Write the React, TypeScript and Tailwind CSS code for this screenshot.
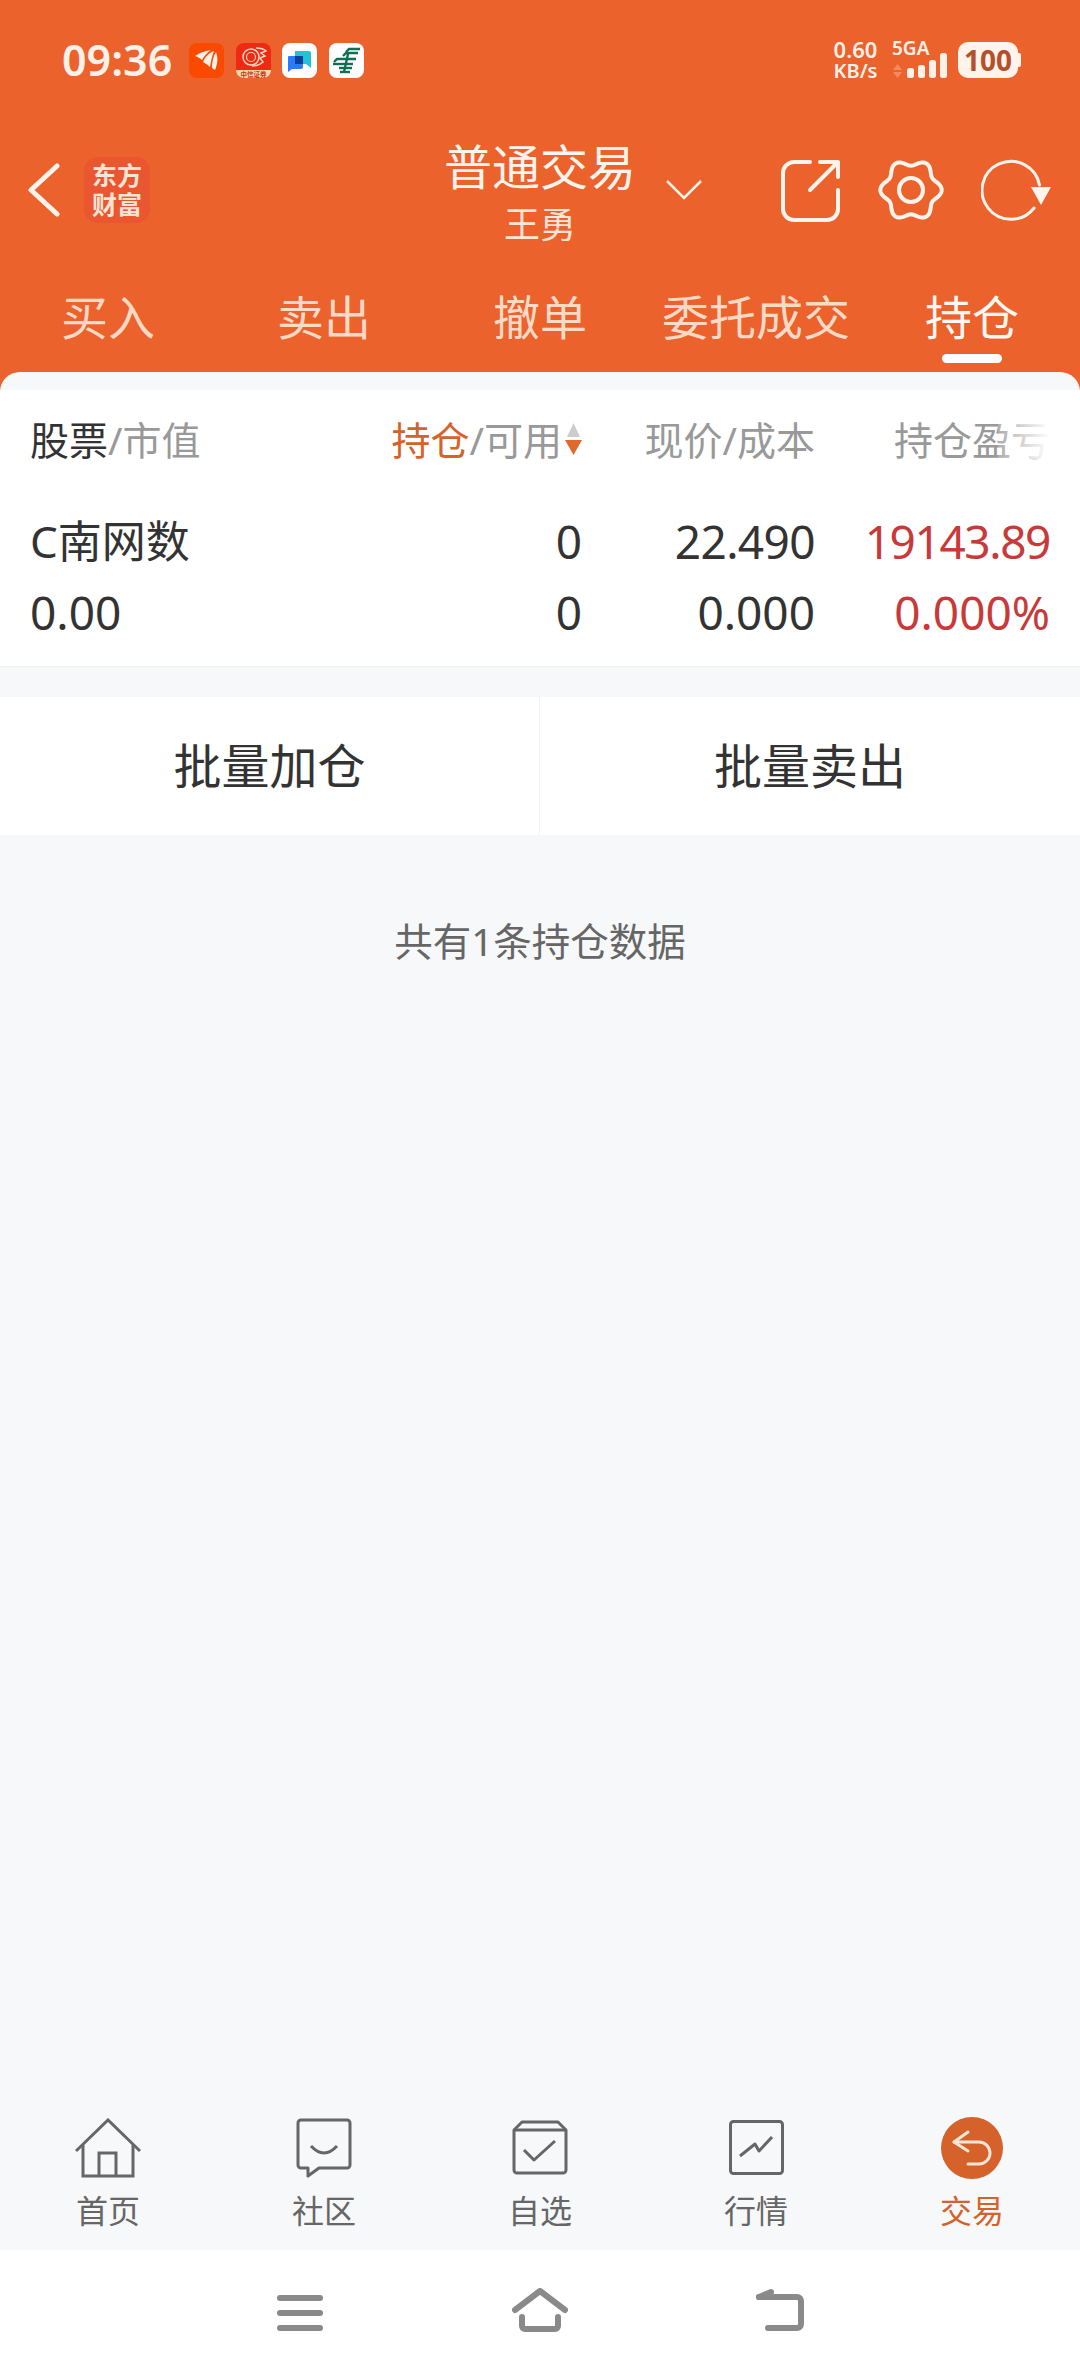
import { Fragment } from 'react';

const tabs = ['买入', '卖出', '撤单', '委托成交', '持仓'];

function gearPath() {
  const pts: string[] = [];
  for (let i = 0; i < 120; i++) {
    const t = (i / 120) * Math.PI * 2;
    const r = 27.5 + 3.2 * Math.cos(6 * t);
    pts.push(`${(33 + r * Math.cos(t)).toFixed(2)},${(32 + r * Math.sin(t)).toFixed(2)}`);
  }
  return `M${pts.join('L')}Z`;
}

function StatusIcons() {
  return (
    <div className="flex items-center gap-[11.5px]">
      <svg width="35" height="35" viewBox="0 0 35 35">
        <rect width="35" height="35" rx="8" fill="#F94A00" />
        <path d="M6 13 C12 9 17 8 22 7 C18 10 15 13 13 17 C11 15 9 14 6 13Z" fill="#FFF1E8" />
        <path d="M14 19 C16 14 20 10 25 8 C23 13 22 18 21 24 C19 22 16 20 14 19Z" fill="#FFF1E8" />
        <path d="M23 25 C23 18 25 12 27 9 C29 14 29 20 26 27 C25 26 24 26 23 25Z" fill="#FFF1E8" />
      </svg>
      <svg width="35" height="35" viewBox="0 0 35 35">
        <rect width="35" height="35" rx="8" fill="#EE2A12" />
        <circle cx="15" cy="14" r="8" fill="none" stroke="#FFD9C4" strokeWidth="1.5" />
        <circle cx="15" cy="14" r="4.5" fill="none" stroke="#FFD9C4" strokeWidth="1.2" />
        <path d="M20 5 C25 5 29 7 30 8 L25 10 L29 13 L24 15 L27 19 C24 22 20 23 16 23" fill="none" stroke="#FFD9C4" strokeWidth="1.4" />
        <path d="M0 27 H35 V27 C35 32 31 35 27 35 H8 C4 35 0 32 0 27Z" fill="#FBD8A8" />
        <text x="17.5" y="33.5" textAnchor="middle" fontSize="6.5" fontWeight="700" fill="#C9331B">中信证券</text>
      </svg>
      <svg width="35" height="35" viewBox="0 0 35 35">
        <rect width="35" height="35" rx="8" fill="#FFFFFF" />
        <path d="M13 8 H27 a2 2 0 0 1 2 2 V25 L24 21 H13Z" fill="#22C4D4" />
        <path d="M7 13 H19 a2 2 0 0 1 2 2 V24 a2 2 0 0 1-2 2 H10 L6 29 V14 a1 1 0 0 1 1-1Z" fill="#2A7CF6" />
        <rect x="13" y="13" width="8" height="8" fill="#0B3F9E" />
      </svg>
      <svg width="35" height="35" viewBox="0 0 35 35">
        <rect width="35" height="35" rx="8" fill="#FFFFFF" />
        <g fill="none" stroke="#0F6F55" strokeWidth="2.4">
          <path d="M17 9 L20 6 H31" />
          <path d="M14 13 L17 10 H29" />
          <path d="M5 19 L8 16 H27" />
          <path d="M4 21 H24" />
          <path d="M10 25 H23" />
          <path d="M11 29 H21" />
          <path d="M19 11 L15 29" />
        </g>
      </svg>
    </div>
  );
}

function NetworkCluster() {
  return (
    <div className="flex h-[36px] items-start text-[#FFF1E8] font-semibold">
      <div className="flex w-[47px] flex-col items-center">
        <span className="text-[22px] leading-[15px]">0.60</span>
        <span className="mt-[6px] text-[20px] leading-[15px]">KB/s</span>
      </div>
      <div className="ml-[13px] flex w-[56px] flex-col">
        <span className="h-[11px] text-[19px] leading-[13px]">5GA</span>
        <svg width="55" height="25" viewBox="0 0 55 25">
          <path d="M5.5 0 L10 6 H1Z M1 8 H10 L5.5 14Z" transform="translate(0 11)" fill="#F58A5E" />
          <rect x="15" y="15" width="7" height="10" rx="2.5" fill="#FFF1E8" />
          <rect x="26" y="12" width="7" height="13" rx="2.5" fill="#FFF1E8" />
          <rect x="37" y="7" width="7" height="18" rx="2.5" fill="#FFF1E8" />
          <rect x="48" y="0" width="7" height="25" rx="2.5" fill="#FFF1E8" />
        </svg>
      </div>
      <div className="ml-[10px] flex items-center">
        <div className="flex h-[36px] w-[60px] items-center justify-center rounded-[10px] bg-[#FFF3EC] text-[28px] font-bold leading-none text-[#B4512C]">
          100
        </div>
        <div className="h-[14px] w-[3px] rounded-r-[2px] bg-[#FFF3EC]" />
      </div>
    </div>
  );
}

function TitleRow() {
  return (
    <div className="mt-[67px] flex h-[97px] items-start">
      <div className="flex w-[444px] items-center pl-[27px] pt-[12px]">
        <svg width="34" height="54" viewBox="0 0 34 54" fill="none" stroke="#FFF4EC" strokeWidth="5" strokeLinecap="round" strokeLinejoin="round">
          <path d="M30 3 L4 27 L30 51" />
        </svg>
        <div className="ml-[23px] flex h-[66px] w-[66px] flex-col items-center justify-center rounded-[14px] bg-[#E9562F] text-[25px] font-bold leading-[29px] text-[#FBE3D6]">
          <span>东方</span>
          <span>财富</span>
        </div>
      </div>
      <div className="flex w-[192px] flex-col items-center text-[#FFF4EC]">
        <span className="text-[48px] leading-[43px]">普通交易</span>
        <span className="mt-[20px] text-[36px] leading-[34px] text-[#FDE5D8]">王勇</span>
      </div>
      <svg className="ml-[30px] mt-[35px]" width="36" height="20" viewBox="0 0 36 20" fill="none" stroke="#FFF4EC" strokeWidth="2.5">
        <path d="M1 1 L18 18 L35 1" />
      </svg>
      <svg className="ml-[79px] mt-[14px]" width="60" height="64" viewBox="0 0 60 64" fill="none" stroke="#FFF4EC" strokeWidth="4" strokeLinecap="round" strokeLinejoin="round">
        <path d="M29 3 H13 a11 11 0 0 0 -11 11 V50 a11 11 0 0 0 11 11 H46 a11 11 0 0 0 11 -11 V31" />
        <path d="M29 31 L57 3 M39 3 H57 V18" />
      </svg>
      <svg className="ml-[37px] mt-[13px]" width="66" height="64" viewBox="0 0 66 64" fill="none" stroke="#FFF4EC" strokeWidth="4">
        <path d={gearPath()} />
        <circle cx="33" cy="32" r="12" />
      </svg>
      <svg className="ml-[37px] mt-[13px]" width="70" height="64" viewBox="0 0 70 64" fill="none">
        <path d="M58.5 27 A29 29 0 1 0 53 50" stroke="#FFF4EC" strokeWidth="3" strokeLinecap="round" />
        <path d="M50 29 H70 L60 47Z" fill="#FFF4EC" />
      </svg>
    </div>
  );
}

function SortArrows() {
  return (
    <svg className="ml-[3px]" width="17" height="32" viewBox="0 0 17 32">
      <path d="M8.5 0 L15 14 H2Z" fill="#CCCCCC" />
      <path d="M0 17 H17 L8.5 32Z" fill="#E06A2B" />
    </svg>
  );
}

function PositionTable() {
  const rows = [
    { name: 'C南网数', hold: '0', price: '22.490', profit: '19143.89', nameCls: 'text-[44px]', priceCls: 'tracking-[-0.6px]', profitCls: 'tracking-[-1.4px]' },
    { name: '0.00', hold: '0', price: '0.000', profit: '0.000%', nameCls: '', priceCls: '', profitCls: '' },
  ];
  return (
    <div className="mt-[18px] border-b border-[#EEEEEE] bg-white px-[30px] pb-[19px]">
      <div className="grid h-[98px] grid-cols-[250px_302px_233px_235px] items-center text-[39px] leading-none text-[#999999]">
        <div>
          <span className="text-[#333333]">股票</span>/市值
        </div>
        <div className="flex items-center justify-end">
          <span className="text-[#D5622A]">持仓</span>/可用
          <SortArrows />
        </div>
        <div className="text-right">现价/成本</div>
        <div className="relative text-right">
          持仓盈亏
          <div className="absolute right-0 top-0 h-full w-[52px] bg-linear-to-r from-white/20 to-white" />
        </div>
      </div>
      <div className="mt-[17px]">
        {rows.map((row) => (
          <div key={row.name} className="grid h-[71px] grid-cols-[250px_302px_233px_235px] items-center text-[46px] leading-none text-[#333333]">
            <div className={row.nameCls}>{row.name}</div>
            <div className="text-right">{row.hold}</div>
            <div className={`text-right ${row.priceCls}`}>{row.price}</div>
            <div className={`text-right text-[#C83A3A] ${row.profitCls}`}>{row.profit}</div>
          </div>
        ))}
      </div>
    </div>
  );
}

const tabIcons = [
  <svg width="66" height="60" viewBox="0 0 66 60" fill="none" stroke="#666666" strokeWidth="3">
    <path d="M1 33 L33 2 L65 33" />
    <path d="M8 27 V58 H58 V27" />
    <path d="M24 58 V35 H41 V58" />
  </svg>,
  <svg width="56" height="60" viewBox="0 0 56 60" fill="none" stroke="#666666" strokeWidth="3" strokeLinejoin="round">
    <path d="M5 2 H51 a3 3 0 0 1 3 3 V47 a3 3 0 0 1 -3 3 H23 L12 58 V50 H5 a3 3 0 0 1 -3 -3 V5 a3 3 0 0 1 3 -3Z" />
    <path d="M15 28 Q28 42 41 28" />
  </svg>,
  <svg width="56" height="56" viewBox="0 0 56 56" fill="none" stroke="#666666" strokeWidth="3" strokeLinejoin="round">
    <path d="M2 10 L10 2 H46 L54 10 V50 a3 3 0 0 1 -3 3 H5 a3 3 0 0 1 -3 -3Z" />
    <path d="M2 10 H54" />
    <path d="M12 30 L22 40 L43 21" />
  </svg>,
  <svg width="55" height="56" viewBox="0 0 55 56" fill="none" stroke="#666666" strokeWidth="3" strokeLinejoin="round">
    <rect x="1.5" y="1.5" width="52" height="52" rx="3" />
    <path d="M11 36 L26 24 L30 31 L43 17" />
  </svg>,
  <div className="flex h-[62px] w-[62px] items-center justify-center rounded-full bg-[#D4622A]">
    <svg width="62" height="62" viewBox="0 0 62 62" fill="none" stroke="#FBE5D6" strokeWidth="3" strokeLinecap="round" strokeLinejoin="round">
      <path d="M27 15 L13 25 L27 34" />
      <path d="M13 25 H38 a11 11 0 0 1 0 22 H27" />
    </svg>
  </div>,
];

const tabLabels = ['首页', '社区', '自选', '行情', '交易'];

function BottomTabs() {
  return (
    <div className="grid h-[133px] grid-cols-5">
      {tabLabels.map((label, i) => (
        <div key={label} className="flex flex-col items-center">
          <div className="flex h-[62px] items-center justify-center">{tabIcons[i]}</div>
          <span className={`mt-[16px] text-[32px] leading-[32px] ${i === 4 ? 'text-[#D4622A]' : 'text-[#666666]'}`}>{label}</span>
        </div>
      ))}
    </div>
  );
}

function SystemNav() {
  return (
    <div className="flex h-[126px] justify-center bg-white pt-[38px]">
      <div className="grid w-[720px] grid-cols-3 justify-items-center">
        <svg width="46" height="45" viewBox="0 0 46 45" fill="#8A8A8A">
          <rect x="0" y="7" width="46" height="6" rx="3" />
          <rect x="0" y="22" width="46" height="6" rx="3" />
          <rect x="0" y="37" width="46" height="6" rx="3" />
        </svg>
        <svg width="56" height="45" viewBox="0 0 56 45" fill="none" stroke="#8A8A8A" strokeWidth="6" strokeLinecap="round">
          <path d="M3 22 L28 3 L53 22" strokeLinejoin="round" />
          <path d="M10 29 V38 a3 3 0 0 0 3 3 H43 a3 3 0 0 0 3 -3 V29" />
        </svg>
        <svg width="48" height="45" viewBox="0 0 48 45" fill="none" stroke="#8A8A8A" strokeWidth="6" strokeLinecap="round">
          <path d="M3 9 H41 a4 4 0 0 1 4 4 V36 a4 4 0 0 1 -4 4 H12" />
          <path d="M3 9 L15 4" />
        </svg>
      </div>
    </div>
  );
}

export default function App() {
  return (
    <div className="flex h-[2376px] w-[1080px] flex-col overflow-hidden bg-[#EB622D] [font-family:'Noto_Sans','Noto_Sans_CJK_SC',sans-serif]">
      <div className="h-[372px] shrink-0">
        <div className="flex h-[78px] items-end pl-[62px] pr-[59px]">
          <span className="mr-[17px] text-[43px] font-semibold leading-[36px] text-[#FFF1E8]">09:36</span>
          <StatusIcons />
          <div className="ml-auto">
            <NetworkCluster />
          </div>
        </div>
        <TitleRow />
        <div className="mt-[52px] grid grid-cols-5">
          {tabs.map((t, i) => (
            <Fragment key={t}>
              <div className="flex flex-col items-center">
                <span className={`text-[47px] leading-[46px] ${i === 4 ? 'text-[#FFF8F3]' : 'text-[#FDD9C6]'}`}>{t}</span>
                {i === 4 && <div className="mt-[14px] h-[9px] w-[60px] rounded-full bg-white" />}
              </div>
            </Fragment>
          ))}
        </div>
      </div>
      <div className="flex flex-1 flex-col rounded-t-[20px] bg-[#F7F8FA]">
        <PositionTable />
        <div className="mt-[30px] grid h-[138px] grid-cols-2 bg-white text-[48px] leading-none text-[#333333]">
          <div className="flex items-center justify-center border-r border-[#F3F3F3]">批量加仓</div>
          <div className="flex items-center justify-center">批量卖出</div>
        </div>
        <div className="mt-[87px] text-center text-[38.5px] leading-[38px] text-[#666666]">共有1条持仓数据</div>
        <div className="flex-1" />
        <BottomTabs />
        <SystemNav />
      </div>
    </div>
  );
}
